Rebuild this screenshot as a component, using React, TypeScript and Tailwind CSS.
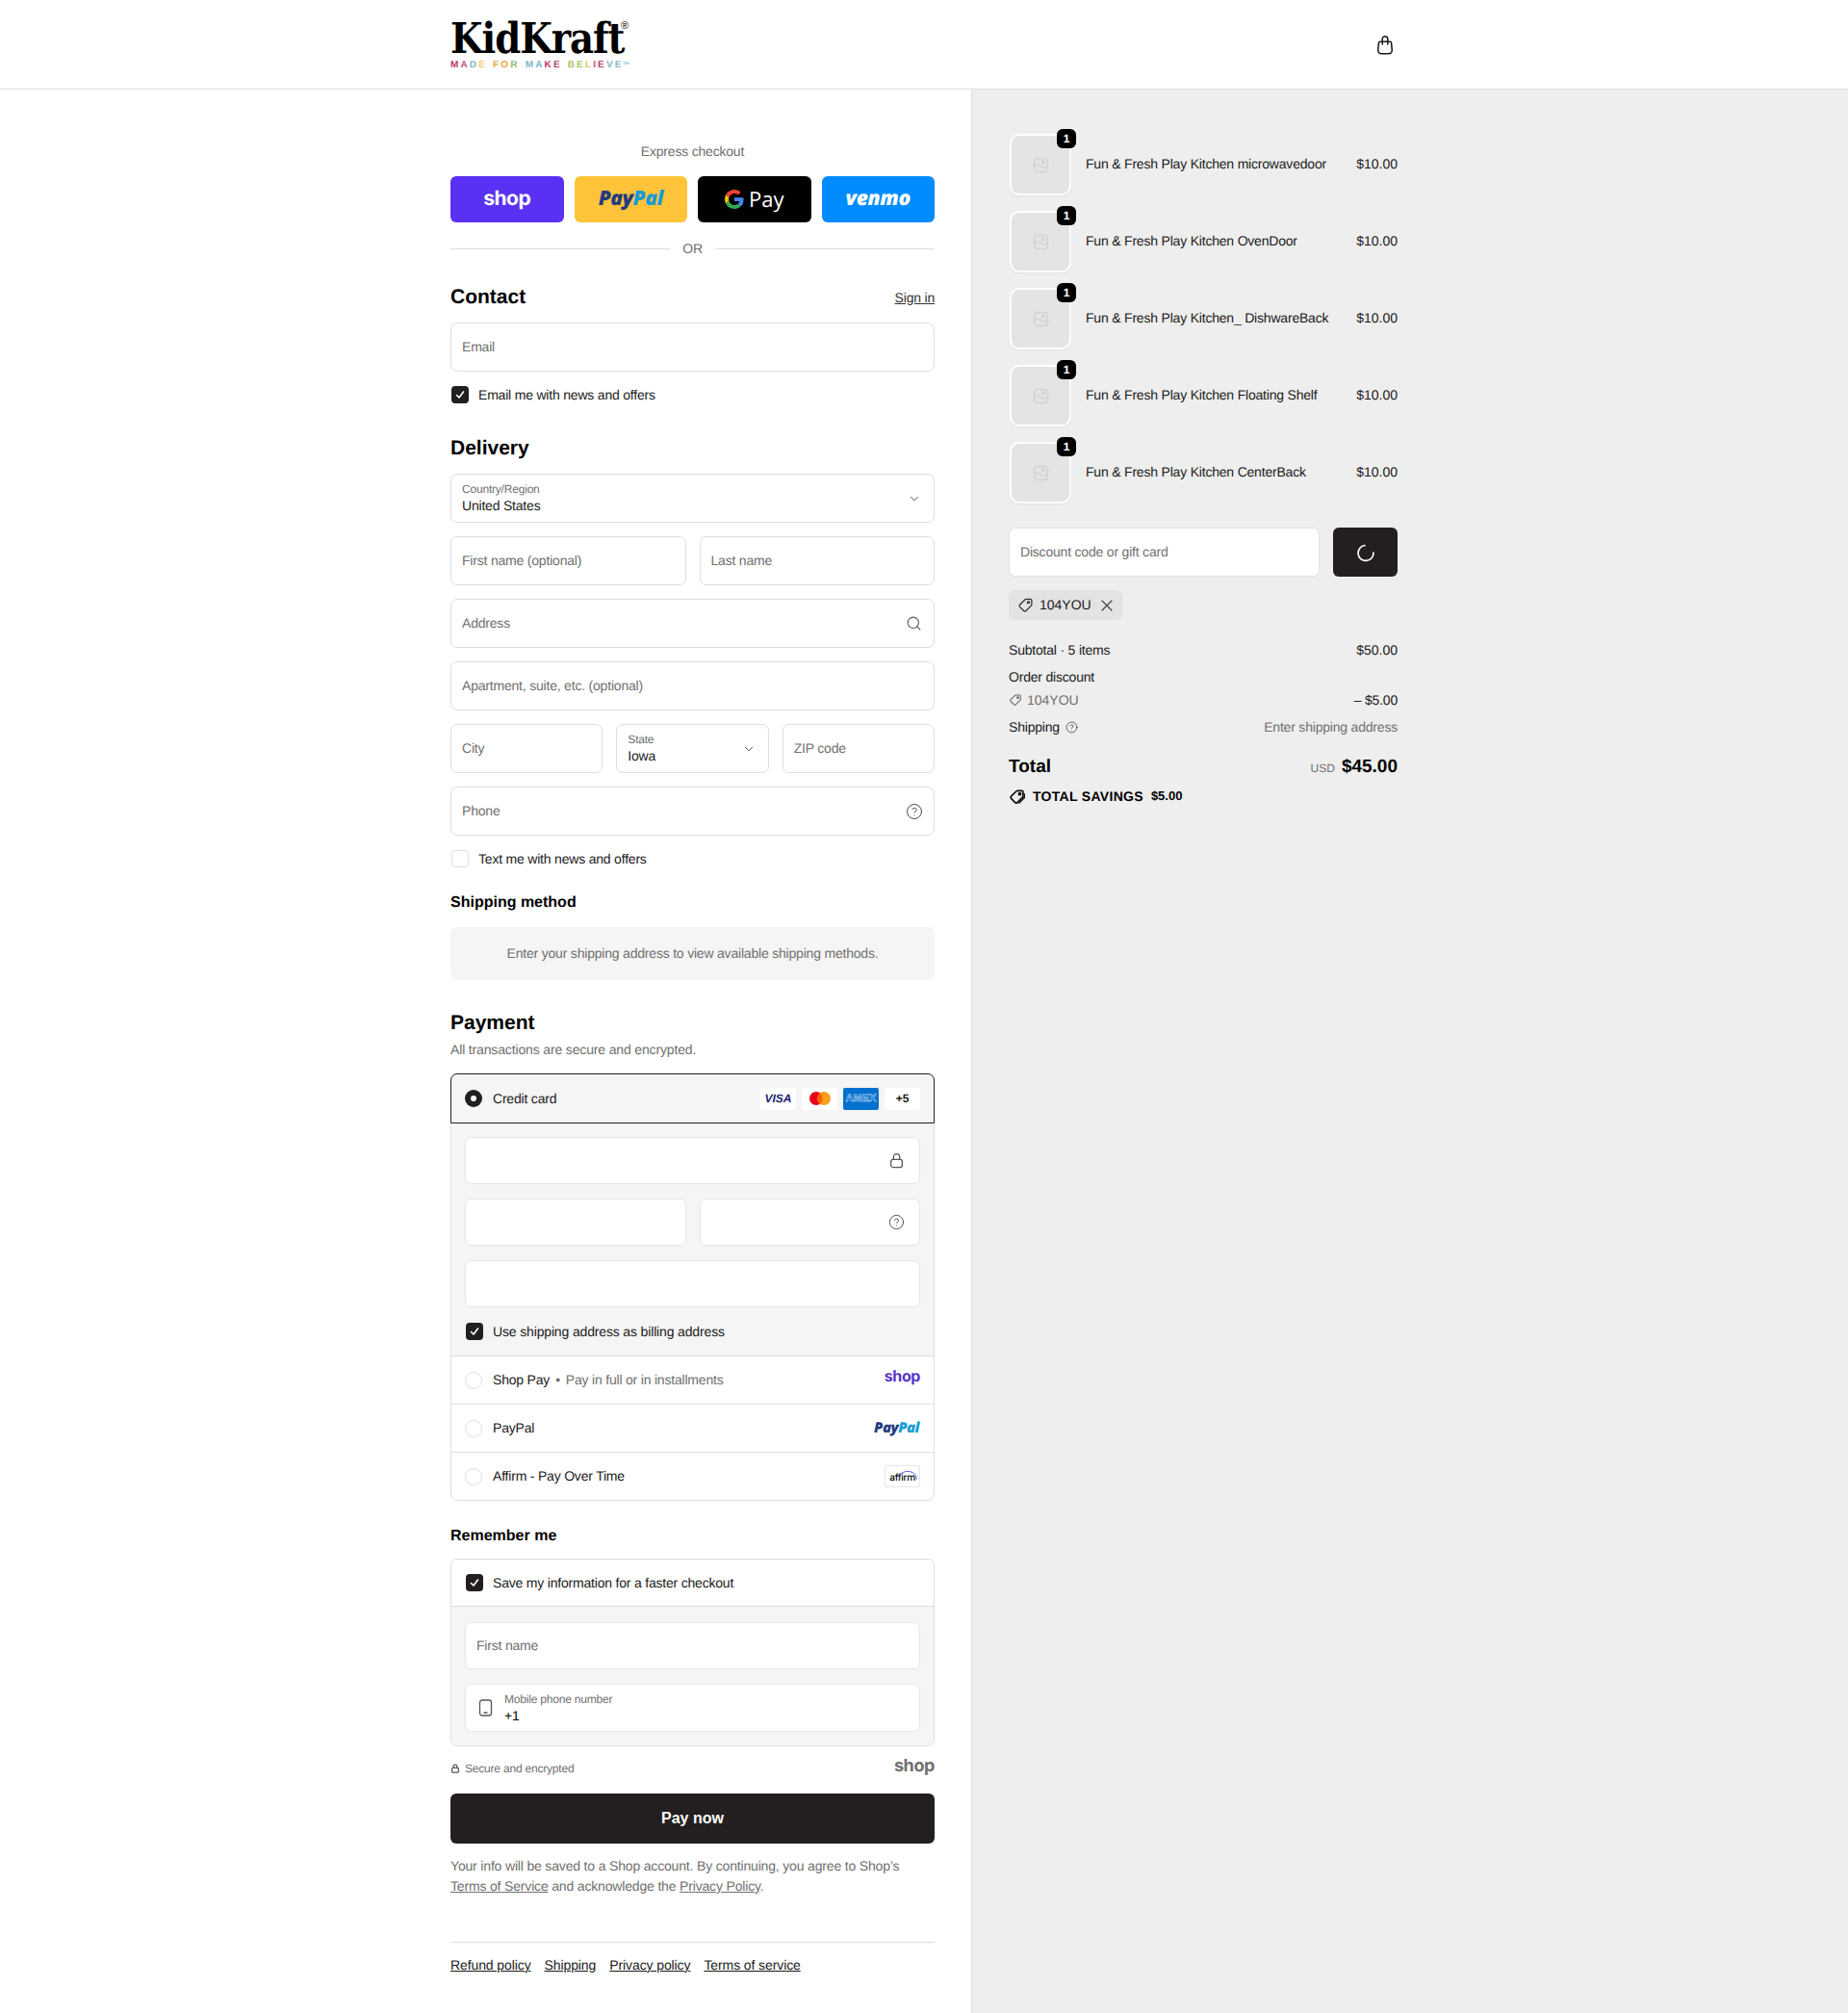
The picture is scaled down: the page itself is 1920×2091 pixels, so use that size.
import { ChevronDown, CircleHelp, Search } from 'lucide-react';
import type { ReactNode } from 'react';

const items = [
  'Fun & Fresh Play Kitchen microwavedoor',
  'Fun & Fresh Play Kitchen OvenDoor',
  'Fun & Fresh Play Kitchen_ DishwareBack',
  'Fun & Fresh Play Kitchen Floating Shelf',
  'Fun & Fresh Play Kitchen CenterBack',
];

const tagline: [string, string][] = [
  ['M', '#b93a6b'], ['A', '#c8527f'], ['D', '#7db6cf'], ['E', '#f0cd6a'], [' ', ''],
  ['F', '#eea64a'], ['O', '#eea64a'], ['R', '#8cc06a'], [' ', ''],
  ['M', '#7db6cf'], ['A', '#7db6cf'], ['K', '#b93a6b'], ['E', '#b93a6b'], [' ', ''],
  ['B', '#a3c65f'], ['E', '#a3c65f'], ['L', '#e8c95c'], ['I', '#c8527f'], ['E', '#b93a6b'], ['V', '#7db6cf'], ['E', '#7db6cf'],
];

function Checkbox({ checked }: { checked?: boolean }) {
  return checked ? (
    <span className="ml-px flex h-[18px] w-[18px] shrink-0 items-center justify-center rounded-[4px] bg-[#231f20]">
      <svg width="10" height="10" viewBox="0 0 10 10" fill="none" stroke="white" strokeWidth="1.6" strokeLinecap="round" strokeLinejoin="round">
        <path d="M1.500 5.500 4 8l4.500-6" />
      </svg>
    </span>
  ) : (
    <span className="ml-px h-[18px] w-[18px] shrink-0 rounded-[4px] border border-[#dedede] bg-white" />
  );
}

function Radio({ checked }: { checked?: boolean }) {
  return checked ? (
    <span className="flex h-[18px] w-[18px] shrink-0 items-center justify-center rounded-full bg-[#231f20]">
      <span className="h-[6px] w-[6px] rounded-full bg-white" />
    </span>
  ) : (
    <span className="h-[18px] w-[18px] shrink-0 rounded-full border border-[#dedede] bg-white" />
  );
}

function Input({ placeholder, icon, className = 'h-[51px] border-[#dedede]' }: { placeholder: string; icon?: ReactNode; className?: string }) {
  return (
    <div className={`flex min-w-0 items-center justify-between rounded-[7px] border bg-white px-[11px] text-[14px] text-[#707070] ${className}`}>
      <span>{placeholder}</span>
      {icon}
    </div>
  );
}

function SelectField({ label, value, className = '' }: { label: string; value: string; className?: string }) {
  return (
    <div className={`flex h-[51px] min-w-0 items-center justify-between rounded-[7px] border border-[#dedede] bg-white px-[11px] ${className}`}>
      <div className="flex flex-col">
        <span className="text-[12px] leading-[15px] text-[#707070]">{label}</span>
        <span className="text-[14px] leading-[18px] text-[#1a1a1a]">{value}</span>
      </div>
      <ChevronDown size={14} strokeWidth={1.5} className="mr-[2px] text-[#333]" />
    </div>
  );
}

function CardField({ icon }: { icon?: ReactNode }) {
  return (
    <div className="flex h-[49px] items-center justify-end rounded-[7px] border border-[#e6e6e6] bg-white pr-[15px]">
      {icon}
    </div>
  );
}

function LockIcon({ size = 17, weight = 1.2 }: { size?: number; weight?: number }) {
  return (
    <svg width={size} height={size} viewBox="0 0 16 16" fill="none" stroke="#555" strokeWidth={weight}>
      <path d="M5 7V4.600a3 3 0 0 1 6 0V7" />
      <rect x="2.500" y="7" width="11" height="7.600" rx="2" />
    </svg>
  );
}

function TagIcon({ size = 16, weight = 1.2, color = '#333', double }: { size?: number; weight?: number; color?: string; double?: boolean }) {
  return (
    <svg width={size} height={size} viewBox="0 0 16 16" fill="none" stroke={color} strokeWidth={weight} strokeLinejoin="round">
      <path d="M8.700 2.200H12.800a1.200 1.200 0 0 1 1.200 1.200V7.500a1.500 1.500 0 0 1-.45 1.050L8.400 13.700a1.500 1.500 0 0 1-2.100 0L2.400 9.800a1.500 1.500 0 0 1 0-2.100L7.600 2.600a1.500 1.500 0 0 1 1.100-.4Z" />
      <circle cx="10.800" cy="5.300" r="1" />
      {double && <path d="M15.500 5v3a2 2 0 0 1-.6 1.400L9.800 14.600" />}
    </svg>
  );
}

function ShopMark({ className }: { className: string }) {
  return <span className={`font-['Inter',sans-serif] font-bold ${className}`}>shop</span>;
}

function PayPalMark({ className }: { className: string }) {
  return (
    <span className={`font-['Open_Sans',sans-serif] font-extrabold italic tracking-[-0.5px] ${className}`}>
      <span className="text-[#253b80]">Pay</span>
      <span className="text-[#179bd7]">Pal</span>
    </span>
  );
}

function ImagePlaceholder() {
  return (
    <svg width="17" height="17" viewBox="0 0 17 17" fill="none" stroke="#d2d2d2" strokeWidth="1.4">
      <rect x="1.500" y="1.500" width="14" height="14" rx="3.500" />
      <path d="M1.500 10c2.500-2.500 4-2.500 7 0s4.500 1 7-1" />
      <circle cx="11" cy="5.500" r="1.200" />
    </svg>
  );
}

function OrderItem({ name }: { name: string }) {
  return (
    <div className="flex h-16 items-center">
      <div className="relative ml-px flex h-16 w-16 shrink-0 items-center justify-center rounded-[10px] border-2 border-white bg-[#e4e4e4] shadow-[0_1px_2px_rgba(0,0,0,0.06)]">
        <ImagePlaceholder />
        <span className="absolute -right-[7px] -top-[7px] flex h-[20px] w-[20px] items-center justify-center rounded-[6px] bg-black text-[12px] font-bold text-white">1</span>
      </div>
      <span className="mb-[1px] ml-[15px] flex-1 text-[14px] text-[#1a1a1a]">{name}</span>
      <span className="mb-[1px] text-[14px] tracking-normal text-[#1a1a1a]">$10.00</span>
    </div>
  );
}

function PayRow({ children, right, className = 'pr-[14px]' }: { children: ReactNode; right: ReactNode; className?: string }) {
  return (
    <div className={`flex h-[50px] items-center border-t border-[#dedede] pl-[14px] ${className}`}>
      <Radio />
      <div className="ml-[11px] flex-1 text-[14px] text-[#1a1a1a]">{children}</div>
      {right}
    </div>
  );
}

function CardBadge({ children, className }: { children: ReactNode; className: string }) {
  return <span className={`flex h-[23px] w-[37px] items-center justify-center rounded-[2px] tracking-normal ${className}`}>{children}</span>;
}

export default function App() {
  return (
    <div className="min-h-[2091px] bg-white font-['Liberation_Sans',Arial,sans-serif] text-[14px] tracking-[-0.2px] text-[#1a1a1a] [text-rendering:geometricPrecision]">
      <header className="flex h-[93px] justify-center border-b border-[#dedede] bg-white">
        <div className="flex w-[984px] items-start justify-between pr-[2px]">
          <div className="pt-[19px]">
            <div className="relative w-[182px] font-['DejaVu_Serif',serif] text-[44px] font-bold leading-[44px]">
              <span className="block origin-left scale-x-[0.88] whitespace-nowrap tracking-[-1.25px] text-black">KidKraft</span>
              <span className="absolute -right-[3px] top-[3px] font-['Liberation_Sans',sans-serif] text-[11px] font-normal leading-none text-black">®</span>
            </div>
            <div className="flex items-start text-[10px] font-bold leading-[10px] tracking-[2.15px]">
              {tagline.map(([c, color], i) =>
                c === ' ' ? (
                  <span key={i} className="w-[6px]" />
                ) : (
                  <span key={i} style={{ color }}>{c}</span>
                )
              )}
              <span className="text-[4px] leading-[6px] tracking-normal text-[#7db6cf]">TM</span>
            </div>
          </div>
          <svg className="mt-[36px]" width="22" height="22" viewBox="0 0 20 20" fill="none" stroke="#1a1a1a" strokeWidth="1.4" strokeLinecap="round">
            <path d="M5.500 6.500h9a1.500 1.500 0 0 1 1.500 1.400l.6 7a3 3 0 0 1-3 3.100H6.400a3 3 0 0 1-3-3.100l.6-7a1.500 1.500 0 0 1 1.500-1.400Z" />
            <path d="M7.500 9V4a2.500 2.500 0 0 1 5 0v5" />
          </svg>
        </div>
      </header>

      <div className="grid grid-cols-[1010px_1fr]">
        <main className="flex justify-end border-r border-[#dedede] pr-[38px] pt-[54px]">
          <div className="flex w-[503px] flex-col pb-[40px]">
            <p className="text-center leading-[21px] text-[#707070]">Express checkout</p>
            <div className="mt-[15px] grid grid-cols-4 gap-[11px]">
              <div className="flex h-[48px] items-center justify-center rounded-[6px] bg-[#5a31f4]">
                <ShopMark className="text-[21px] tracking-[-0.5px] text-white" />
              </div>
              <div className="flex h-[48px] items-center justify-center rounded-[6px] bg-[#ffc439]">
                <PayPalMark className="text-[21px]" />
              </div>
              <div className="flex h-[48px] items-center justify-center gap-[5px] rounded-[6px] bg-black">
                <svg width="20" height="20" viewBox="0 0 48 48">
                  <path fill="#EA4335" d="M24 9.500c3.500 0 6.700 1.200 9.200 3.600l6.900-6.900C35.900 2.400 30.500 0 24 0 14.600 0 6.500 5.400 2.600 13.200l8 6.200C12.500 13.600 17.800 9.500 24 9.500z" />
                  <path fill="#4285F4" d="M46.900 24.500c0-1.600-.1-3.100-.4-4.500H24v9h12.900c-.6 3-2.200 5.500-4.700 7.200l7.700 6c4.500-4.200 7-10.300 7-17.700z" />
                  <path fill="#FBBC05" d="M10.500 28.600c-.5-1.400-.8-3-.8-4.600s.3-3.200.8-4.600l-8-6.200C.9 16.500 0 20.100 0 24s.9 7.500 2.600 10.800l7.900-6.200z" />
                  <path fill="#34A853" d="M24 48c6.500 0 11.900-2.100 15.900-5.800l-7.700-6c-2.200 1.500-4.900 2.300-8.200 2.300-6.200 0-11.500-4.200-13.400-9.800l-8 6.200C6.500 42.600 14.600 48 24 48z" />
                </svg>
                <span className="font-['Open_Sans',sans-serif] text-[22px] tracking-normal text-white">Pay</span>
              </div>
              <div className="flex h-[48px] items-center justify-center rounded-[6px] bg-[#008cff]">
                <span className="font-['Open_Sans',sans-serif] text-[21px] font-extrabold italic tracking-[-0.3px] text-white">venmo</span>
              </div>
            </div>
            <div className="mt-[17px] flex h-[20px] items-center gap-[13px] text-[#707070]">
              <span className="h-px flex-1 bg-[#dedede]" />
              <span>OR</span>
              <span className="h-px flex-1 bg-[#dedede]" />
            </div>

            <div className="mt-[26px] flex h-[28px] items-center justify-between">
              <h2 className="h-[28px] text-[21px] font-bold leading-[30px] tracking-normal text-black">Contact</h2>
              <a className="mt-[3px] text-[14px] text-[#333] underline">Sign in</a>
            </div>
            <Input className="mt-[13px] h-[51px] border-[#dedede]" placeholder="Email" />
            <label className="mt-[15px] flex h-[18px] items-center gap-[10px]">
              <Checkbox checked />
              <span>Email me with news and offers</span>
            </label>

            <h2 className="mt-[32px] h-[28px] text-[21px] font-bold leading-[30px] tracking-normal text-black">Delivery</h2>
            <div className="mt-[13px] flex flex-col gap-[14px]">
              <SelectField label="Country/Region" value="United States" />
              <div className="grid grid-cols-2 gap-[14px]">
                <Input placeholder="First name (optional)" />
                <Input placeholder="Last name" />
              </div>
              <Input placeholder="Address" icon={<Search size={17} strokeWidth={1.5} className="mr-[1px] text-[#555]" />} />
              <Input placeholder="Apartment, suite, etc. (optional)" />
              <div className="grid grid-cols-3 gap-[14px]">
                <Input placeholder="City" />
                <SelectField label="State" value="Iowa" />
                <Input placeholder="ZIP code" />
              </div>
              <Input placeholder="Phone" icon={<CircleHelp size={18} strokeWidth={1.3} className="text-[#444]" />} />
            </div>
            <label className="mt-[15px] flex h-[18px] items-center gap-[10px]">
              <Checkbox />
              <span>Text me with news and offers</span>
            </label>

            <h3 className="mt-[26px] text-[16px] font-bold leading-[22px] tracking-normal text-black">Shipping method</h3>
            <div className="mt-[14px] flex h-[55px] items-center justify-center rounded-[7px] bg-[#f5f5f5] text-[#707070]">
              Enter your shipping address to view available shipping methods.
            </div>

            <h2 className="mt-[30px] h-[28px] text-[21px] font-bold leading-[30px] tracking-normal text-black">Payment</h2>
            <p className="mt-[4px] leading-[20px] tracking-[-0.15px] text-[#707070]">All transactions are secure and encrypted.</p>

            <div className="mt-[15px] rounded-[7px] border border-[#dedede]">
              <div className="-mx-px -mt-px flex h-[52px] items-center rounded-t-[7px] border border-[#231f20] bg-[#f5f5f5] pl-[14px] pr-[14px]">
                <Radio checked />
                <span className="ml-[11px] flex-1">Credit card</span>
                <div className="flex items-center gap-[6px]">
                  <CardBadge className="bg-white">
                    <span className="text-[12px] font-bold italic text-[#1a1f71]">VISA</span>
                  </CardBadge>
                  <CardBadge className="bg-white">
                    <svg width="22" height="14" viewBox="0 0 22 14">
                      <circle cx="7" cy="7" r="7" fill="#eb001b" />
                      <circle cx="15" cy="7" r="7" fill="#f79e1b" />
                      <path d="M11 1.500a7 7 0 0 1 0 11 7 7 0 0 1 0-11Z" fill="#ff5f00" />
                    </svg>
                  </CardBadge>
                  <CardBadge className="bg-[#0670cf]">
                    <span className="text-[11px] font-bold text-[#0670cf] [-webkit-text-stroke:0.35px_#ffffff]">AMEX</span>
                  </CardBadge>
                  <CardBadge className="bg-white text-[12px] font-bold">+5</CardBadge>
                </div>
              </div>
              <div className="bg-[#f5f5f5] px-[14px] pb-[16px] pt-[14px]">
                <div className="flex flex-col gap-[15px]">
                  <CardField icon={<LockIcon />} />
                  <div className="grid grid-cols-2 gap-[14px]">
                    <CardField />
                    <CardField icon={<CircleHelp size={17} strokeWidth={1.3} className="text-[#444]" />} />
                  </div>
                  <CardField />
                </div>
                <label className="mt-[16px] flex h-[18px] items-center gap-[10px]">
                  <Checkbox checked />
                  <span className="tracking-[-0.15px]">Use shipping address as billing address</span>
                </label>
              </div>
              <PayRow right={<ShopMark className="-mt-[9px] text-[16px] tracking-[-0.4px] text-[#5433c8]" />}>
                Shop Pay<span className="mx-[6px] text-[#707070]">•</span><span className="text-[#707070]">Pay in full or in installments</span>
              </PayRow>
              <PayRow className="pr-[15px]" right={<PayPalMark className="text-[15px]" />}>PayPal</PayRow>
              <PayRow
                right={
                  <span className="relative flex h-[23px] w-[37px] items-center justify-center rounded-[2px] border border-[#e6e6e6] pt-[4px] font-['Inter',sans-serif] text-[10px] font-medium tracking-[-0.3px] text-black">
                    affirm
                    <svg className="absolute right-[1px] top-[3px]" width="22" height="12" viewBox="0 0 22 12" fill="none" stroke="#4a4af4" strokeWidth="0.9">
                      <path d="M2 8a9 7 0 0 1 18 3" />
                    </svg>
                  </span>
                }
              >
                Affirm - Pay Over Time
              </PayRow>
            </div>

            <h3 className="mt-[27px] text-[16px] font-bold leading-[20px] tracking-normal text-black">Remember me</h3>
            <div className="mt-[13px] overflow-hidden rounded-[7px] border border-[#dedede]">
              <label className="flex h-[49px] items-center gap-[10px] border-b border-[#dedede] pl-[14px]">
                <Checkbox checked />
                <span>Save my information for a faster checkout</span>
              </label>
              <div className="flex flex-col gap-[15px] bg-[#f5f5f5] px-[14px] pb-[14px] pt-[16px]">
                <Input className="h-[49px] border-[#e6e6e6]" placeholder="First name" />
                <div className="flex h-[50px] items-center rounded-[7px] border border-[#e6e6e6] bg-white pl-[13px]">
                  <svg width="15" height="18" viewBox="0 0 15 18" fill="none" stroke="#555" strokeWidth="1.300" strokeLinecap="round">
                    <rect x="1.500" y="1" width="12" height="16" rx="2.500" />
                    <path d="M6 14h3" />
                  </svg>
                  <div className="ml-[12px] flex flex-col">
                    <span className="text-[12px] leading-[15px] text-[#707070]">Mobile phone number</span>
                    <span className="text-[14px] leading-[18px] text-black">+1</span>
                  </div>
                </div>
              </div>
            </div>

            <div className="mt-[13px] flex h-[20px] items-center justify-between">
              <span className="flex items-center gap-[5px] text-[12px] text-[#707070]">
                <LockIcon size={10} weight={2} />
                Secure and encrypted
              </span>
              <ShopMark className="-mt-[6px] text-[18px] tracking-[-0.4px] text-[#707070]" />
            </div>

            <button className="mt-[16px] h-[52px] rounded-[6px] bg-[#231f20] text-[16px] font-bold tracking-normal text-white">Pay now</button>

            <p className="mt-[13px] leading-[21px] tracking-[-0.17px] text-[#707070]">
              Your info will be saved to a Shop account. By continuing, you agree to Shop’s
              <br />
              <a className="underline">Terms of Service</a> and acknowledge the <a className="underline">Privacy Policy</a>.
            </p>

            <footer className="mt-[47px] flex gap-[14px] border-t border-[#dedede] pt-[13px] leading-[20px] tracking-[-0.1px]">
              <a className="underline">Refund policy</a>
              <a className="underline">Shipping</a>
              <a className="underline">Privacy policy</a>
              <a className="underline">Terms of service</a>
            </footer>
          </div>
        </main>

        <aside className="bg-[#eeeeee] pl-[38px] pt-[46px]">
          <div className="flex w-[404px] flex-col">
            <div className="flex flex-col gap-[16px]">
              {items.map((name) => (
                <OrderItem key={name} name={name} />
              ))}
            </div>
            <div className="mt-[25px] flex gap-[14px]">
              <div className="flex h-[51px] flex-1 items-center rounded-[7px] border border-[#e2e2e2] bg-white px-[11px] text-[#707070]">
                Discount code or gift card
              </div>
              <div className="flex h-[51px] w-[67px] items-center justify-center rounded-[6px] bg-[#231f20]">
                <svg width="20" height="20" viewBox="0 0 20 20" fill="none" stroke="white" strokeWidth="1.700" strokeLinecap="round">
                  <path d="M9 2.500a8 8 0 1 0 9 7.500" />
                </svg>
              </div>
            </div>
            <div className="mt-[14px] flex h-[31px] w-[118px] items-center rounded-[6px] bg-[#e3e3e3] pl-[9px]">
              <TagIcon size={17} />
              <span className="ml-[6px] tracking-normal">104YOU</span>
              <svg className="ml-[10px]" width="12" height="12" viewBox="0 0 12 12" fill="none" stroke="#444" strokeWidth="1.200" strokeLinecap="round">
                <path d="M1 1l10 10M11 1 1 11" />
              </svg>
            </div>
            <div className="mt-[21px] flex h-[20px] items-center justify-between">
              <span>Subtotal · 5 items</span>
              <span className="tracking-normal">$50.00</span>
            </div>
            <div className="mt-[8px] flex h-[20px] items-center">Order discount</div>
            <div className="mt-[4px] flex h-[20px] items-center justify-between">
              <span className="flex items-center gap-[5px] tracking-normal text-[#707070]">
                <TagIcon size={14} color="#666" />
                104YOU
              </span>
              <span>– $5.00</span>
            </div>
            <div className="mt-[8px] flex h-[20px] items-center justify-between">
              <span className="flex items-center gap-[6px]">
                Shipping
                <CircleHelp size={13} strokeWidth={1.5} className="text-[#444]" />
              </span>
              <span className="text-[#707070]">Enter shipping address</span>
            </div>
            <div className="mt-[18px] flex h-[28px] items-center justify-between tracking-normal">
              <span className="text-[19px] font-bold text-black">Total</span>
              <span className="flex items-baseline gap-[7px]">
                <span className="text-[12px] text-[#707070]">USD</span>
                <span className="text-[19px] font-bold text-black">$45.00</span>
              </span>
            </div>
            <div className="mt-[6px] flex h-[20px] items-center font-bold tracking-[0.3px] text-black">
              <TagIcon size={17} weight={1.6} color="#111" double />
              <span className="ml-[8px]">TOTAL SAVINGS</span>
              <span className="ml-[8px] text-[13px] tracking-normal">$5.00</span>
            </div>
          </div>
        </aside>
      </div>
    </div>
  );
}
